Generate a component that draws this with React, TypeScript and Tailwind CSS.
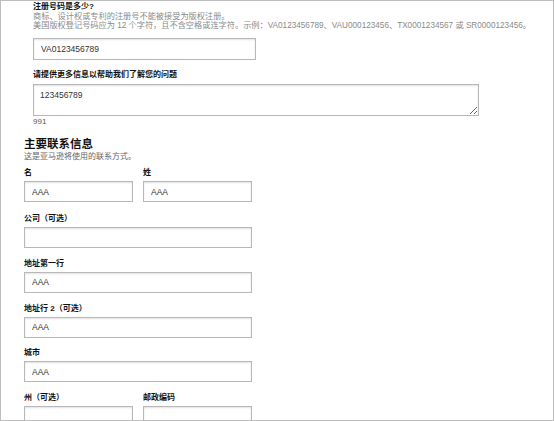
import React from 'react';

const font = { fontFamily: '"Liberation Sans", Arial, "Noto Sans CJK SC", sans-serif' };

const inputCls =
    'block h-[21px] border border-[#b8b8b8] bg-white pl-[7px] text-[8.5px] leading-[19px] text-[#333] shadow-[inset_0_1px_2px_rgba(0,0,0,0.12)] outline-none';

const Label: React.FC<{ children: React.ReactNode }> = ({ children }) => (
    <div className="text-[8px] font-bold leading-[10px] text-[#111]">{children}</div>
);

const Field: React.FC<{ label: string; value?: string; width: string; className?: string }> = ({ label, value, width, className }) => (
    <div className={className}>
        <Label>{label}</Label>
        <input readOnly defaultValue={value ?? ''} className={`${inputCls} mt-[3px] ${width}`} />
    </div>
);

export default function App() {
    return (
        <div className="h-[421px] w-[554px] overflow-hidden border border-[#bdbdbd] bg-white" style={font}>
            {/* registration number */}
            <div className="ml-[32px] pt-[1px]">
                <div className="text-[8px] font-bold leading-[9.5px] text-[#111]">注册号码是多少?</div>
                <div className="text-[8.2px] leading-[9.5px] text-[#8a8a8a]">商标、设计权或专利的注册号不能被接受为版权注册。</div>
                <div className="whitespace-nowrap text-[8.2px] leading-[9.5px] text-[#8a8a8a]">
                    美国版权登记号码应为 12 个字符，且不含空格或连字符。示例：VA0123456789、VAU000123456、TX0001234567 或 SR0000123456。
                </div>
                <input readOnly defaultValue="VA0123456789" className={`${inputCls} mt-[7.5px] h-[22px] w-[223px]`} />

                <div className="mt-[10px]">
                    <Label>请提供更多信息以帮助我们了解您的问题</Label>
                </div>
                <textarea
                    readOnly
                    defaultValue="123456789"
                    className="mt-[4px] block h-[32px] w-[446px] resize border border-[#b8b8b8] bg-white px-[6px] pt-[5px] text-[8.5px] leading-[10px] text-[#333] shadow-[inset_0_1px_2px_rgba(0,0,0,0.12)] outline-none"
                />
                <div className="mt-[1px] text-[8px] leading-[10px] text-[#555]">991</div>
            </div>

            {/* main contact */}
            <div className="ml-[23px] mt-[10px]">
                <div className="text-[11.5px] font-bold leading-[14px] text-[#111]">主要联系信息</div>
                <div className="mt-[1px] text-[8px] leading-[10px] text-[#666]">这是亚马逊将使用的联系方式。</div>

                <div className="mt-[6px] flex gap-[10px]">
                    <Field label="名" value="AAA" width="w-[109px]" />
                    <Field label="姓" value="AAA" width="w-[109px]" />
                </div>

                <Field className="mt-[12px]" label="公司（可选）" width="w-[228px]" />
                <Field className="mt-[10.75px]" label="地址第一行" value="AAA" width="w-[228px]" />
                <Field className="mt-[10.75px]" label="地址行 2（可选）" value="AAA" width="w-[228px]" />
                <Field className="mt-[10.75px]" label="城市" value="AAA" width="w-[228px]" />

                <div className="mt-[10.75px] flex gap-[10px]">
                    <Field label="州（可选）" width="w-[109px]" />
                    <Field label="邮政编码" width="w-[109px]" />
                </div>
            </div>
        </div>
    );
}
